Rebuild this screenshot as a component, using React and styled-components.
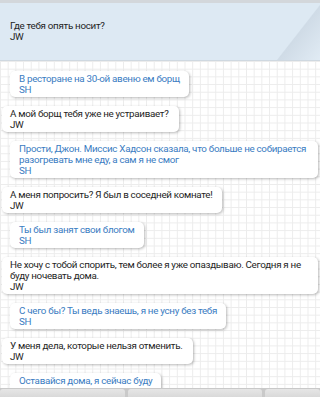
import React from "react";
import styled, { createGlobalStyle } from "styled-components";

const GlobalStyle = createGlobalStyle`
  html, body {
    margin: 0;
    padding: 0;
    background: #fff;
  }
  body {
    font-family: Roboto, "Liberation Sans", sans-serif;
  }
`;

const messages = [
  { from: "SH", text: "В ресторане на 30-ой авеню ем борщ" },
  { from: "JW", text: "А мой борщ тебя уже не устраивает?" },
  {
    from: "SH",
    text: "Прости, Джон. Миссис Хадсон сказала, что больше не собирается разогревать мне еду, а сам я не смог",
  },
  { from: "JW", text: "А меня попросить? Я был в соседней комнате!" },
  { from: "SH", text: "Ты был занят свои блогом" },
  {
    from: "JW",
    text: "Не хочу с тобой спорить, тем более я уже опаздываю. Сегодня я не буду ночевать дома.",
  },
  { from: "SH", text: "С чего бы? Ты ведь знаешь, я не усну без тебя" },
  { from: "JW", text: "У меня дела, которые нельзя отменить." },
  { from: "SH", text: "Оставайся дома, я сейчас буду" },
];

const Screen = styled.div`
  width: 320px;
  height: 397px;
  display: flex;
  flex-direction: column;
  overflow: hidden;
  font-size: 9.8px;
  line-height: 11px;
  letter-spacing: -0.3px;
`;

const TopStrip = styled.div`
  height: 3px;
  background: #d3d7db;
  flex-shrink: 0;
`;

const Header = styled.div`
  height: 58px;
  flex-shrink: 0;
  box-sizing: border-box;
  padding: 17px 10px 0;
  color: #1e1e1e;
  border-bottom: 1px solid #cfd8e0;
  background:
    linear-gradient(128deg, rgba(255, 255, 255, 0) 88%, rgba(196, 208, 220, 0.55) 88.4%, rgba(230, 238, 246, 0.4) 100%),
    #dde9f3;
`;

const Feed = styled.div`
  flex: 1;
  min-height: 0;
  overflow: hidden;
  display: flex;
  flex-direction: column;
  align-items: flex-start;
  gap: 9px;
  padding: 10px 2px 0;
  background-color: #fff;
  background-image:
    linear-gradient(to right, #ececec 1px, transparent 1px),
    linear-gradient(to bottom, #ececec 1px, transparent 1px);
  background-size: 7.7px 7.7px;
`;

const Bubble = styled.div`
  flex-shrink: 0;
  box-sizing: border-box;
  max-width: ${(p) => (p.$mine ? "316px" : "309px")};
  margin-left: ${(p) => (p.$mine ? "0" : "8px")};
  padding: ${(p) => (p.$mine ? "2px 10px 2px 8px" : "2px 9px 2px 9px")};
  background: #fff;
  border-radius: 5px;
  box-shadow: 1px 1px 3px rgba(0, 0, 0, 0.28);
  color: ${(p) => (p.$mine ? "#1e1e1e" : "#3a7cc2")};
`;

const BottomBar = styled.div`
  height: 8px;
  flex-shrink: 0;
  display: flex;
  gap: 3px;
  background: #c9c9c9;
  padding-top: 1px;
`;

const Tab = styled.div`
  flex: ${(p) => p.$grow};
  background: linear-gradient(#e6e6e6, #d9d9d9);
  border-radius: 3px 3px 0 0;
`;

export default function App() {
  return (
    <>
      <GlobalStyle />
      <Screen>
        <TopStrip />
        <Header>
          Где тебя опять носит?
          <br />
          JW
        </Header>
        <Feed>
          {messages.map((m, i) => (
            <Bubble key={i} $mine={m.from === "JW"}>
              {m.text}
              <br />
              {m.from}
            </Bubble>
          ))}
        </Feed>
        <BottomBar>
          <Tab $grow={125} />
          <Tab $grow={134} />
          <Tab $grow={55} />
        </BottomBar>
      </Screen>
    </>
  );
}
